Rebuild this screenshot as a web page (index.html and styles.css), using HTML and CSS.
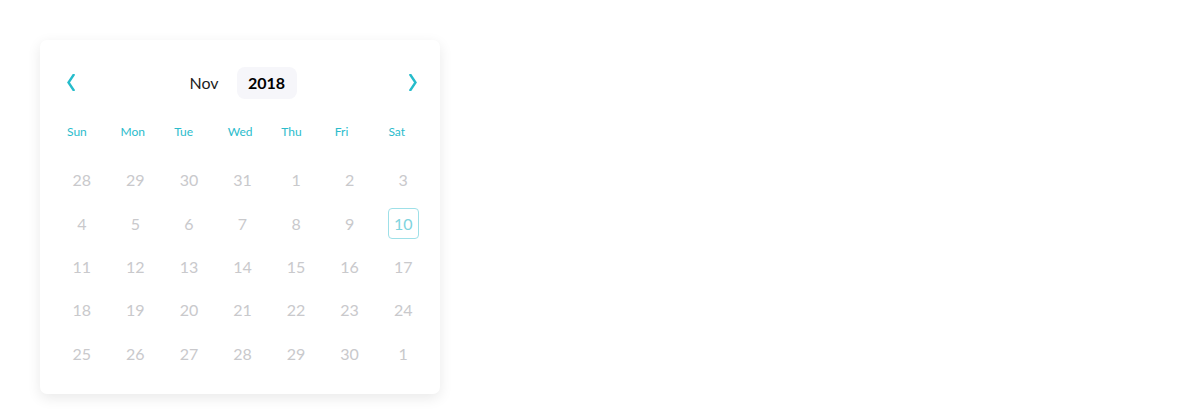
FILE: index.html
```html
<!DOCTYPE html>
<html>
<head>
<meta charset="utf-8">
<link rel="stylesheet" href="styles.css">
</head>
<body>
<div class="card">
  <div class="header">
    <button class="nav">
      <svg width="8" height="17" viewBox="0 0 8 17"><path d="M6.5 1 L1.5 8.5 L6.5 16" fill="none" stroke="#26bccb" stroke-width="2.4" stroke-linecap="square"/></svg>
    </button>
    <div class="title">
      <span class="month">Nov</span>
      <span class="year">2018</span>
    </div>
    <button class="nav">
      <svg width="8" height="17" viewBox="0 0 8 17"><path d="M1.5 1 L6.5 8.5 L1.5 16" fill="none" stroke="#26bccb" stroke-width="2.4" stroke-linecap="square"/></svg>
    </button>
  </div>
  <div class="weekdays">
    <span>Sun</span><span>Mon</span><span>Tue</span><span>Wed</span><span>Thu</span><span>Fri</span><span>Sat</span>
  </div>
  <div class="days">
    <span>28</span><span>29</span><span>30</span><span>31</span><span>1</span><span>2</span><span>3</span>
    <span>4</span><span>5</span><span>6</span><span>7</span><span>8</span><span>9</span><span class="today">10</span>
    <span>11</span><span>12</span><span>13</span><span>14</span><span>15</span><span>16</span><span>17</span>
    <span>18</span><span>19</span><span>20</span><span>21</span><span>22</span><span>23</span><span>24</span>
    <span>25</span><span>26</span><span>27</span><span>28</span><span>29</span><span>30</span><span>1</span>
  </div>
</div>
</body>
</html>
```

FILE: styles.css
```css
* { box-sizing: border-box; }
html, body { margin: 0; padding: 0; background: #fff; }
body {
  font-family: Lato, "Open Sans", sans-serif;
  padding: 40px;
}
.card {
  width: 400px;
  height: 354px;
  background: #fff;
  border-radius: 7px;
  box-shadow: 0 4px 14px rgba(0, 0, 0, 0.09);
  padding: 26px 10px 0 15px;
}
.header {
  display: flex;
  align-items: center;
  justify-content: space-between;
  height: 33px;
  padding: 0 13px 0 12px;
}
.nav {
  border: 0;
  background: none;
  padding: 0;
  width: 8px;
  height: 17px;
  display: flex;
  align-items: center;
  justify-content: center;
  cursor: pointer;
}
.title {
  display: flex;
  align-items: center;
  gap: 18px;
  margin-left: 2px;
}
.month {
  font-size: 16px;
  color: #222;
}
.year {
  font-size: 16px;
  font-weight: 700;
  color: #000;
  background: #f6f6fa;
  border-radius: 8px;
  width: 60px;
  height: 32px;
  display: flex;
  align-items: center;
  justify-content: center;
}
.weekdays {
  display: grid;
  grid-template-columns: repeat(7, 1fr);
  margin-top: 22px;
  height: 20px;
  align-items: center;
}
.weekdays span {
  font-size: 12px;
  color: #2bbccc;
  padding-left: 12px;
}
.days {
  display: grid;
  grid-template-columns: repeat(7, 1fr);
  grid-auto-rows: 43.4px;
  margin-top: 17px;
}
.days span {
  display: flex;
  align-items: center;
  justify-content: center;
  font-size: 16px;
  color: #c9c9cc;
}
.days span.today {
  width: 31px;
  height: 31px;
  justify-self: center;
  align-self: center;
  border: 1px solid #9ee0e8;
  border-radius: 4px;
  color: #7fd4de;
}
```
